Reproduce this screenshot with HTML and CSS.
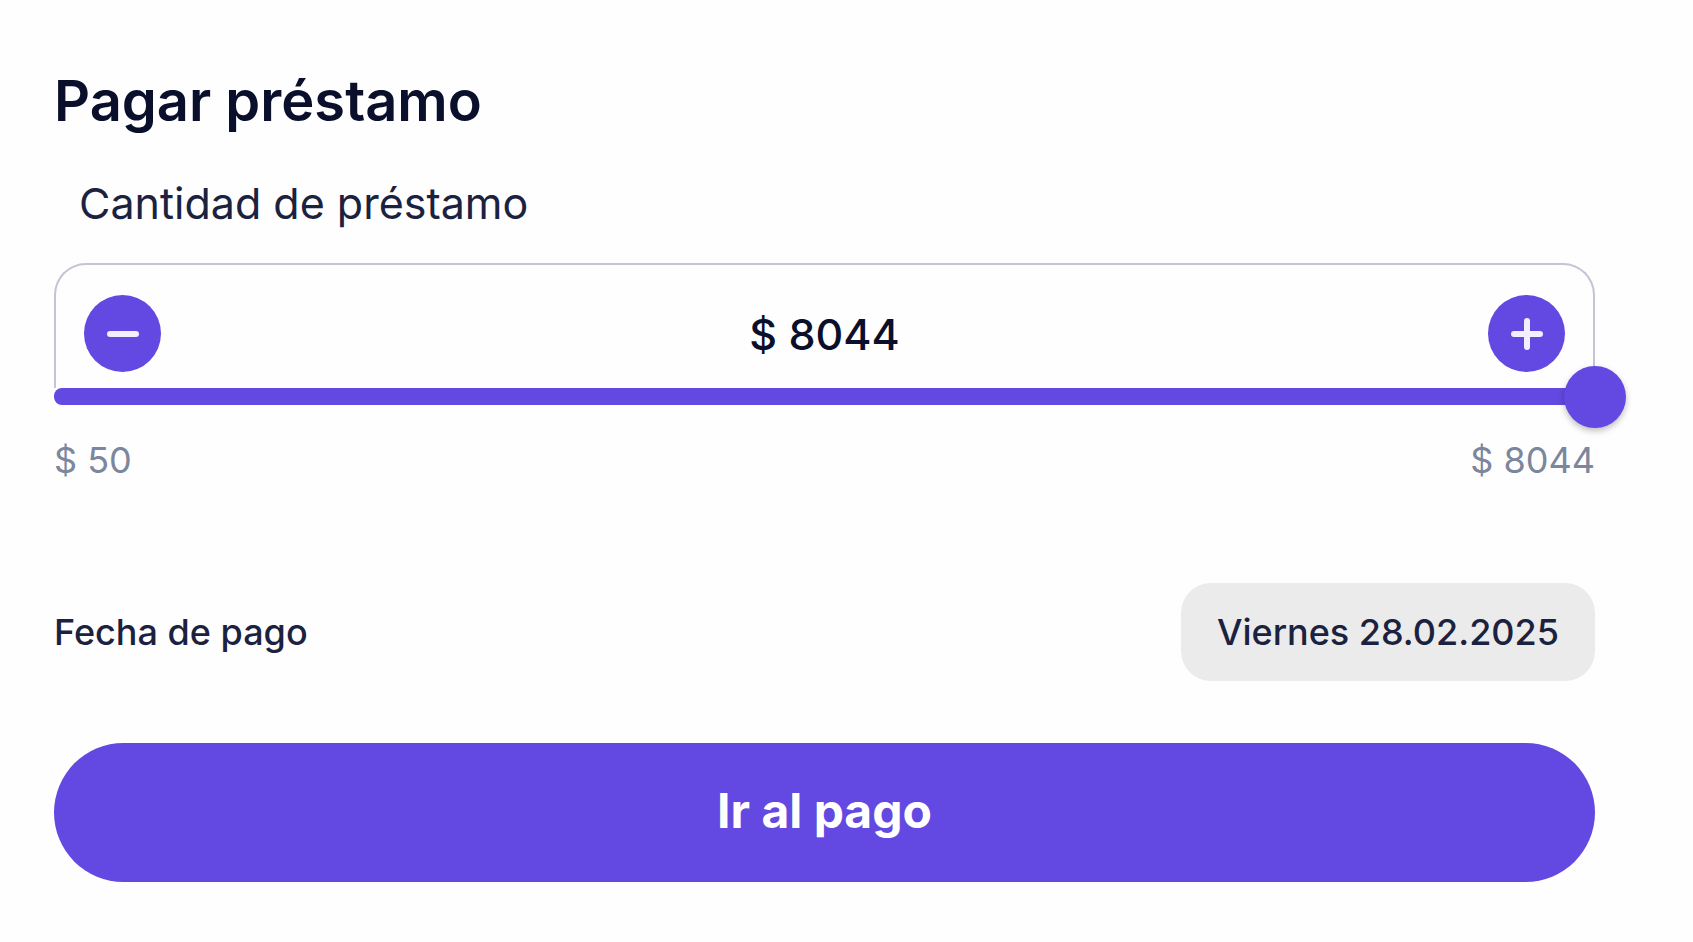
FILE: index.html
```
<!DOCTYPE html>
<html lang="es">
  <head>
    <meta charset="utf-8">
    <title>Pagar préstamo</title>
    <link rel="stylesheet" href="styles.css">
  </head>
  <body>
    <form class="loan">
      <h1>Pagar préstamo</h1>
      <label class="loan-label" for="amount">Cantidad de préstamo</label>
      <div class="amount-box">
        <button type="button" class="round-button" aria-label="Restar" onclick="changeAmount(-1)">
          <svg viewBox="0 0 32 32"><path d="M3 16h26"/></svg>
        </button>
        <output id="amountText" for="amount">$ 8044</output>
        <button type="button" class="round-button" aria-label="Sumar" onclick="changeAmount(1)">
          <svg viewBox="0 0 32 32"><path d="M3 16h26M16 3v26"/></svg>
        </button>
      </div>
      <div class="slider">
        <input type="range" id="amount" min="50" max="8044" value="8044" oninput="showAmount()">
      </div>
      <div class="limits">
        <span>$ 50</span>
        <span>$ 8044</span>
      </div>
      <div class="date-row">
        <span>Fecha de pago</span>
        <span class="date">Viernes 28.02.2025</span>
      </div>
      <button type="button" class="pay-button">Ir al pago</button>
    </form>
    <script>
      var amount = document.getElementById("amount");

      function showAmount() {
        document.getElementById("amountText").textContent = "$ " + amount.value;
        var percent = (amount.value - amount.min) / (amount.max - amount.min) * 100;
        amount.parentNode.style.setProperty("--filled", percent + "%");
      }

      function changeAmount(step) {
        amount.value = Number(amount.value) + step;
        showAmount();
      }
    </script>
  </body>
</html>
```
FILE: styles.css
```
* {
  box-sizing: border-box;
}

body {
  margin: 0;
  background-color: #fefefe;
  color: #1b2240;
  font-family: Inter, "Liberation Sans", sans-serif;
}

button {
  border: none;
  background-color: #6348e1;
  color: white;
  font-family: inherit;
  cursor: pointer;
}

.loan {
  display: flex;
  flex-direction: column;
  padding: 69px 98px 60px 54px;
}

h1 {
  margin: 0;
  color: #0a0f2c;
  font-size: 56px;
  font-weight: 600;
  line-height: 64px;
}

.loan-label {
  margin: 44px 0 34px;
  padding-left: 25px;
  font-size: 43px;
  line-height: 52px;
}

.amount-box {
  display: flex;
  align-items: center;
  justify-content: space-between;
  height: 125px;
  padding: 14px 28px 0;
  border: 2px solid #c3c5d3;
  border-bottom: none;
  border-radius: 32px 32px 0 0;
}

.amount-box output {
  color: #0a0f2c;
  font-size: 43px;
  font-weight: 500;
}

.round-button {
  display: flex;
  align-items: center;
  justify-content: center;
  width: 77px;
  height: 77px;
  padding: 0;
  border-radius: 50%;
}

.round-button svg {
  width: 32px;
  height: 32px;
  fill: none;
  stroke: #f3efff;
  stroke-width: 6;
  stroke-linecap: round;
}

.slider {
  --filled: 100%;
  height: 17px;
  border-radius: 8px;
  background: linear-gradient(to right, #6348e1 var(--filled), #ebebeb var(--filled));
}

/* the thumb sticks out half its width at both ends */
.slider input {
  display: block;
  width: calc(100% + 62px);
  height: 17px;
  margin: 0 -31px;
  appearance: none;
  background: transparent;
}

.slider input::-webkit-slider-thumb {
  appearance: none;
  width: 62px;
  height: 62px;
  border-radius: 50%;
  background-color: #6348e1;
  box-shadow: 0 3px 6px rgba(0, 0, 0, 0.25);
}

.limits {
  display: flex;
  justify-content: space-between;
  margin-top: 31px;
  color: #7c869c;
  font-size: 36px;
  line-height: 48px;
}

.date-row {
  display: flex;
  align-items: center;
  justify-content: space-between;
  margin: 99px 0 62px;
  font-size: 36px;
  font-weight: 500;
}

.date {
  padding: 25px 36px;
  border-radius: 30px;
  background-color: #ebebeb;
  line-height: 48px;
}

.pay-button {
  height: 139px;
  padding-bottom: 6px;
  border-radius: 70px;
  font-size: 48px;
  font-weight: 700;
}
```
